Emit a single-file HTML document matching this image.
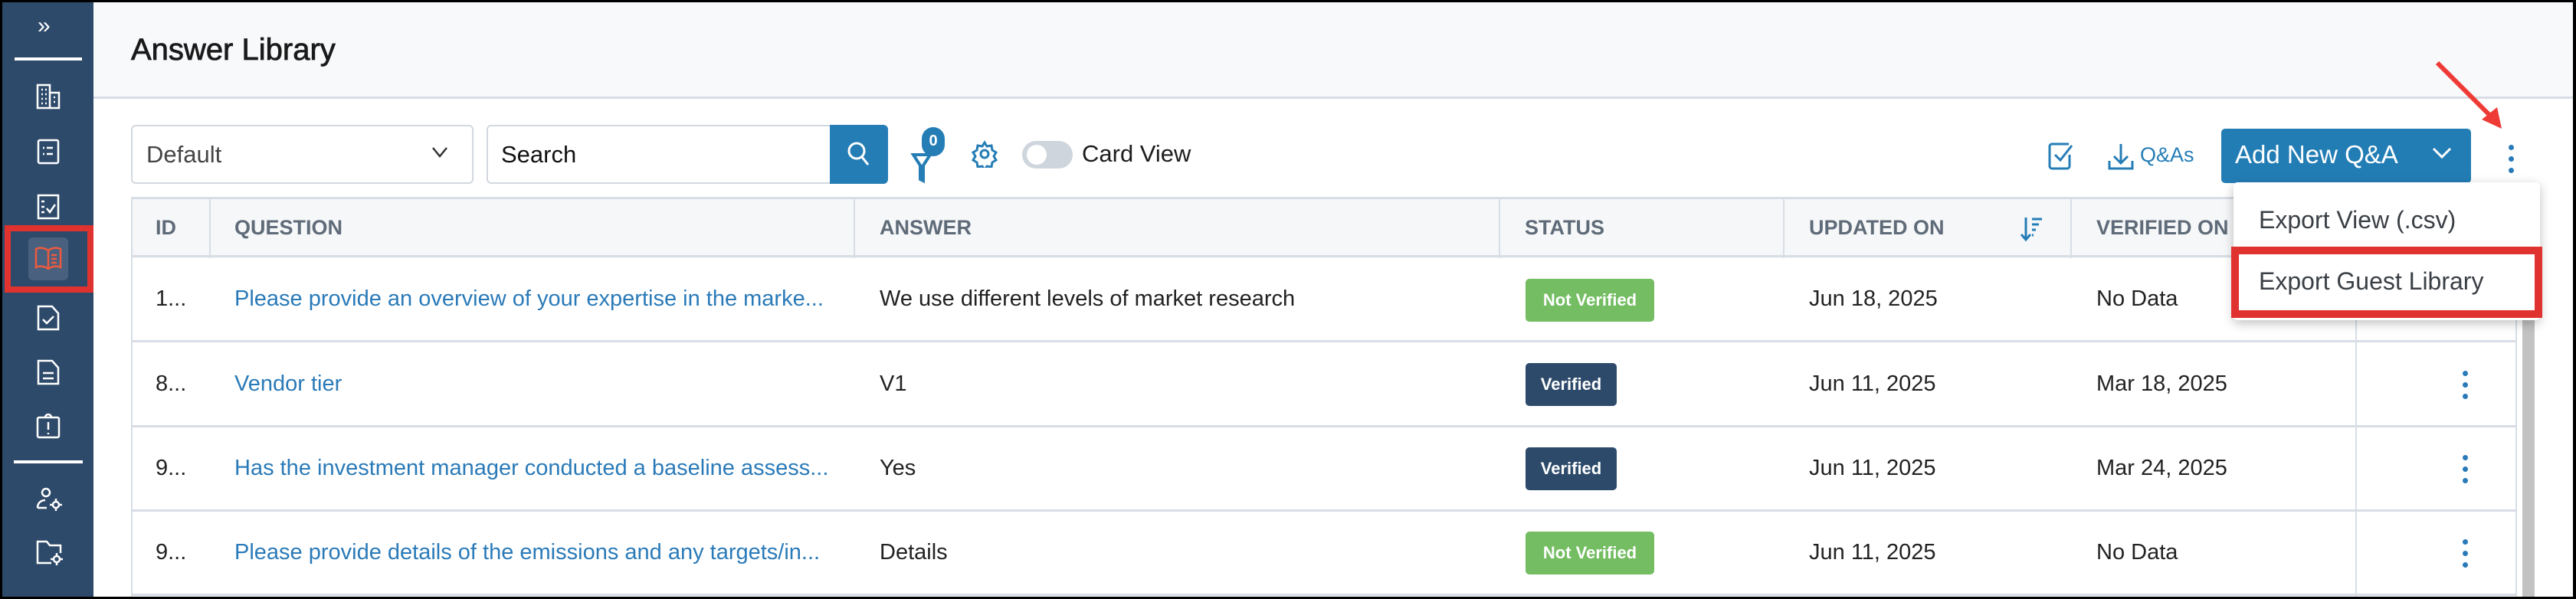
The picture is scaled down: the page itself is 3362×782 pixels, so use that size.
<!DOCTYPE html>
<html><head><meta charset="utf-8"><style>
*{box-sizing:border-box;margin:0;padding:0}
body{width:3362px;height:782px;overflow:hidden;background:#000;font-family:"Liberation Sans","DejaVu Sans",sans-serif;position:relative}
.abs{position:absolute}
#frame{position:absolute;left:3px;top:3px;width:3355px;height:776px;background:#fff;overflow:hidden}
#side{position:absolute;left:0;top:0;width:119px;height:776px;background:#2e4a6a}
.ico{position:absolute;left:44px;width:32px;height:34px}
#hdr{position:absolute;left:119px;top:0;right:0;height:126px;background:#f8f9fb;border-bottom:3px solid #d8dee5}
.t{position:absolute;white-space:nowrap}
.cell{position:absolute;font-size:29px;color:#222;white-space:nowrap}
.q{color:#2a7ab8}
.th{position:absolute;font-size:27px;font-weight:bold;color:#5f6b78;top:279px}
.vl{position:absolute;width:2px;background:#d8dee5}
.hl{position:absolute;height:3px;background:#d8dee5;left:168px;width:3112px}
.badge{position:absolute;height:56px;border-radius:5px;color:#fff;font-size:22px;font-weight:bold;line-height:56px;text-align:center}
.dots{position:absolute;width:6px}
.dots i{display:block;width:7px;height:7px;border-radius:50%;background:#2a7ab8;margin-bottom:8px}
</style></head><body>
<div id="frame">
<div id="side">
 <div class="t" style="left:46px;top:14px;color:#fff;font-size:30px">»</div>
 <div class="abs" style="left:16px;top:72px;width:88px;height:4px;background:#fff"></div>
 <svg class="ico" style="top:106px" viewBox="0 0 32 34" fill="none" stroke="#fff" stroke-width="2.5"><rect x="2" y="2" width="16" height="30"/><path d="M18 12h12v20H18M7 8h2M12 8h2M7 14h2M12 14h2M7 20h2M12 20h2M7 26h2M12 26h2M23 18h2M23 24h2"/></svg>
 <svg class="ico" style="top:178px" viewBox="0 0 32 34" fill="none" stroke="#fff" stroke-width="2.5"><rect x="3" y="2" width="26" height="30" rx="2"/><path d="M9 12h2M14 12h8M9 20h2M14 20h8"/></svg>
 <svg class="ico" style="top:250px" viewBox="0 0 32 34" fill="none" stroke="#fff" stroke-width="2.5"><rect x="3" y="2" width="26" height="30"/><path d="M7 10h4M7 17h4M7 24h4M14 19l4 5 7-10"/></svg>
 <div class="abs" style="left:3px;top:291px;width:116px;height:88px;border:8px solid #e0332f"></div>
 <div class="abs" style="left:34px;top:307px;width:52px;height:56px;background:#49607f;border-radius:6px"></div>
 <svg class="ico" style="left:42px;top:318px;width:36px" viewBox="0 0 36 34" fill="none" stroke="#ef5a3c" stroke-width="2.5"><path d="M18 6C13 2 6 2 2 4v24c4-2 11-2 16 2c5-4 12-4 16-2V4c-4-2-11-2-16 2zM18 6v24M22 12h7M22 17h7M22 22h7"/></svg>
 <svg class="ico" style="top:395px" viewBox="0 0 32 34" fill="none" stroke="#fff" stroke-width="2.5"><path d="M3 2h18l8 9v21H3zM9 19l5 5 9-9"/></svg>
 <svg class="ico" style="top:466px" viewBox="0 0 32 34" fill="none" stroke="#fff" stroke-width="2.5"><path d="M3 2h18l8 9v21H3zM9 18h14M9 25h14"/></svg>
 <svg class="ico" style="top:536px" viewBox="0 0 32 34" fill="none" stroke="#fff" stroke-width="2.5"><rect x="2" y="6" width="28" height="26" rx="2"/><path d="M12 6a4 4 0 0 1 8 0M16 12v10M16 26v2"/></svg>
 <div class="abs" style="left:15px;top:598px;width:90px;height:4px;background:#fff"></div>
 <svg class="ico" style="top:632px;width:36px" viewBox="0 0 36 34" fill="none" stroke="#fff" stroke-width="2.5"><circle cx="13" cy="8" r="5"/><path d="M2 28c0-6 4-10 10-10M2 28h12"/><circle cx="26" cy="24" r="4"/><path d="M26 16v3M26 29v3M18 24h3M31 24h3"/></svg>
 <svg class="ico" style="top:702px;width:36px" viewBox="0 0 36 34" fill="none" stroke="#fff" stroke-width="2.5"><path d="M20 30H2V2h12l4 5h14v10"/><circle cx="27" cy="25" r="4"/><path d="M27 17v3M27 30v3M19 25h3M32 25h3"/></svg>
</div>
<div id="hdr"><div class="t" style="left:49px;top:40px;font-size:40px;color:#1a1a1a;-webkit-text-stroke:0.8px #1a1a1a">Answer Library</div></div>

<!-- toolbar -->
<div class="abs" style="left:168px;top:160px;width:447px;height:77px;border:2px solid #d3d8de;border-radius:6px"></div>
<div class="t" style="left:188px;top:181px;font-size:31px;color:#444">Default</div>
<svg class="abs" style="left:560px;top:187px" width="22" height="18" viewBox="0 0 22 18" fill="none" stroke="#333" stroke-width="2.5"><path d="M2 3l9 11 9-11"/></svg>
<div class="abs" style="left:632px;top:160px;width:451px;height:77px;border:2px solid #d3d8de;border-radius:6px 0 0 6px"></div>
<div class="t" style="left:651px;top:181px;font-size:31px;color:#111">Search</div>
<div class="abs" style="left:1080px;top:160px;width:76px;height:77px;background:#257db6;border-radius:0 6px 6px 0"></div>
<svg class="abs" style="left:1102px;top:180px" width="32" height="36" viewBox="0 0 32 36" fill="none" stroke="#fff" stroke-width="3"><circle cx="13" cy="14" r="10"/><path d="M20 22l8 10"/></svg>
<svg class="abs" style="left:1185px;top:163px" width="56" height="76" viewBox="0 0 56 76" fill="none" stroke="#257db6" stroke-width="4"><path d="M4 36h22l-9 14v20l-4 -2V50z"/></svg>
<div class="abs" style="left:1200px;top:163px;width:30px;height:38px;border-radius:15px;background:#257db6;color:#fff;font-size:20px;font-weight:bold;text-align:center;line-height:36px">0</div>
<svg class="abs" style="left:1265px;top:180px" width="34" height="36" viewBox="0 0 34 36" fill="none" stroke="#257db6" stroke-width="3"><circle cx="17" cy="18" r="5"/><path d="M17 3l3 5 6-1 1 6 5 3-3 5 3 5-5 3-1 6-6-1-3 5-3-5-6 1-1-6-5-3 3-5-3-5 5-3 1-6 6 1z"/></svg>
<div class="abs" style="left:1331px;top:181px;width:66px;height:36px;border-radius:18px;background:#cfd5dd"></div>
<div class="abs" style="left:1337px;top:186px;width:26px;height:26px;border-radius:13px;background:#fff"></div>
<div class="t" style="left:1409px;top:180px;font-size:31px;color:#1d1d1d">Card View</div>

<svg class="abs" style="left:2670px;top:183px" width="36" height="36" viewBox="0 0 36 36" fill="none" stroke="#257db6" stroke-width="3"><path d="M28 16v15a3 3 0 0 1-3 3H5a3 3 0 0 1-3-3V5a3 3 0 0 1 3-3h22"/><path d="M9 16l7 7 15-19"/></svg>
<svg class="abs" style="left:2748px;top:183px" width="36" height="36" viewBox="0 0 36 36" fill="none" stroke="#257db6" stroke-width="3"><path d="M17 2v24M8 18l9 9 9-9M2 24v10h30V24"/></svg>
<div class="t" style="left:2790px;top:184px;font-size:27px;color:#257db6">Q&amp;As</div>
<div class="abs" style="left:2896px;top:165px;width:326px;height:71px;background:#237db5;border-radius:5px"></div>
<div class="t" style="left:2914px;top:180px;font-size:33px;color:#fff">Add New Q&amp;A</div>
<svg class="abs" style="left:3170px;top:188px" width="28" height="18" viewBox="0 0 28 18" fill="none" stroke="#fff" stroke-width="3"><path d="M3 3l11 11 11-11"/></svg>
<div class="dots" style="left:3271px;top:186px"><i></i><i></i><i></i></div>
<svg class="abs" style="left:3170px;top:75px" width="110" height="100" viewBox="0 0 110 100"><path d="M8 4L86 82" stroke="#ef3b36" stroke-width="6"/><path d="M92 90L66 78L86 62z" fill="#ef3b36"/></svg>

<!-- table -->
<div class="abs" style="left:168px;top:254px;width:3114px;height:80px;background:#f5f7f9"></div>
<div class="hl" style="top:254px"></div>
<div class="hl" style="top:330px"></div>
<div class="hl" style="top:441px"></div>
<div class="hl" style="top:552px"></div>
<div class="hl" style="top:662px"></div>
<div class="hl" style="top:772px"></div>
<div class="vl" style="left:168px;top:254px;height:530px"></div>
<div class="vl" style="left:270px;top:254px;height:80px"></div>
<div class="vl" style="left:1111px;top:254px;height:80px"></div>
<div class="vl" style="left:1953px;top:254px;height:80px"></div>
<div class="vl" style="left:2324px;top:254px;height:80px"></div>
<div class="vl" style="left:2699px;top:254px;height:80px"></div>
<div class="vl" style="left:3071px;top:254px;height:530px"></div>
<div class="vl" style="left:3280px;top:254px;height:530px"></div>
<div class="abs" style="left:3289px;top:330px;width:16px;height:460px;background:#c2c2c2"></div>
<div class="th" style="left:200px">ID</div>
<div class="th" style="left:303px">QUESTION</div>
<div class="th" style="left:1145px">ANSWER</div>
<div class="th" style="left:1987px">STATUS</div>
<div class="th" style="left:2358px">UPDATED ON</div>
<svg class="abs" style="left:2633px;top:279px" width="32" height="34" viewBox="0 0 32 34" fill="none" stroke="#257db6" stroke-width="3"><path d="M8 2v28M2 24l6 7 6-7M16 4h13M16 11h9M16 18h5M16 25h2"/></svg>
<div class="th" style="left:2733px">VERIFIED ON</div>

<div class="cell" style="left:200px;top:371px">1...</div>
<div class="cell q" style="left:303px;top:371px">Please provide an overview of your expertise in the marke...</div>
<div class="cell" style="left:1145px;top:371px">We use different levels of market research</div>
<div class="badge" style="left:1988px;top:361px;width:168px;background:#74bd63">Not Verified</div>
<div class="cell" style="left:2358px;top:371px">Jun 18, 2025</div>
<div class="cell" style="left:2733px;top:371px">No Data</div>

<div class="cell" style="left:200px;top:482px">8...</div>
<div class="cell q" style="left:303px;top:482px">Vendor tier</div>
<div class="cell" style="left:1145px;top:482px">V1</div>
<div class="badge" style="left:1988px;top:471px;width:119px;background:#2d4a6a">Verified</div>
<div class="cell" style="left:2358px;top:482px">Jun 11, 2025</div>
<div class="cell" style="left:2733px;top:482px">Mar 18, 2025</div>
<div class="dots" style="left:3211px;top:481px"><i></i><i></i><i></i></div>

<div class="cell" style="left:200px;top:592px">9...</div>
<div class="cell q" style="left:303px;top:592px">Has the investment manager conducted a baseline assess...</div>
<div class="cell" style="left:1145px;top:592px">Yes</div>
<div class="badge" style="left:1988px;top:581px;width:119px;background:#2d4a6a">Verified</div>
<div class="cell" style="left:2358px;top:592px">Jun 11, 2025</div>
<div class="cell" style="left:2733px;top:592px">Mar 24, 2025</div>
<div class="dots" style="left:3211px;top:591px"><i></i><i></i><i></i></div>

<div class="cell" style="left:200px;top:702px">9...</div>
<div class="cell q" style="left:303px;top:702px">Please provide details of the emissions and any targets/in...</div>
<div class="cell" style="left:1145px;top:702px">Details</div>
<div class="badge" style="left:1988px;top:691px;width:168px;background:#74bd63">Not Verified</div>
<div class="cell" style="left:2358px;top:702px">Jun 11, 2025</div>
<div class="cell" style="left:2733px;top:702px">No Data</div>
<div class="dots" style="left:3211px;top:701px"><i></i><i></i><i></i></div>

<!-- dropdown -->
<div class="abs" style="left:2912px;top:235px;width:400px;height:180px;background:#fff;border-radius:5px;box-shadow:0 4px 14px rgba(0,0,0,.25)"></div>
<div class="t" style="left:2945px;top:266px;font-size:32px;color:#3a3f45">Export View (.csv)</div>
<div class="abs" style="left:2909px;top:319px;width:406px;height:93px;border:10px solid #e0332f"></div>
<div class="t" style="left:2945px;top:346px;font-size:32px;color:#3a3f45">Export Guest Library</div>
</div>
</body></html>
